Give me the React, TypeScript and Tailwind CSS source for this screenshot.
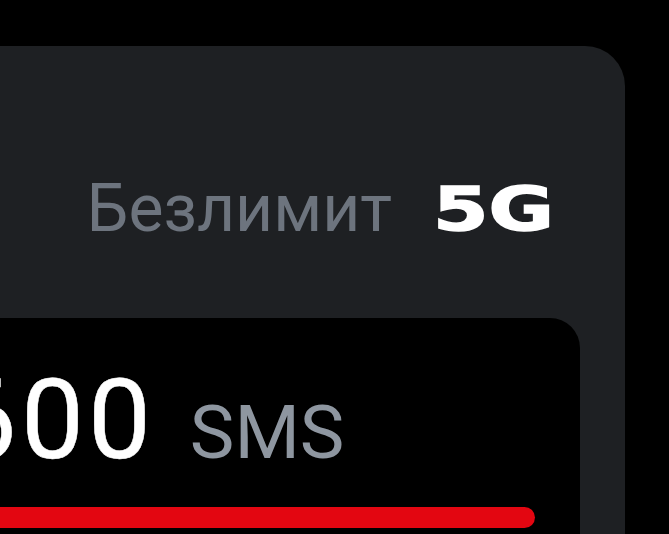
export default function App() {
  return (
    <div className="w-[669px] h-[534px] bg-black overflow-hidden pt-[46px]" style={{ fontFamily: "Roboto, 'Liberation Sans', sans-serif" }}>
      {/* Tariff card */}
      <div className="ml-[-40px] w-[665px] h-[520px] bg-[#1e2023] rounded-tr-[40px] pr-[45px]">
        <div className="flex items-center justify-end gap-[41px] pr-[30px] pt-[130px] leading-none whitespace-nowrap">
          <span className="text-[66px] text-[#6d747e]">Безлимит</span>
          <span className="inline-block w-[117px]">
            <span
              className="inline-block origin-left scale-x-[1.33] text-[60px] font-black text-white [-webkit-text-stroke:1.5px_white]"
              style={{ fontFamily: "'DejaVu Sans', sans-serif" }}
            >
              5G
            </span>
          </span>
        </div>

        {/* SMS block */}
        <div className="mt-[76px] bg-black rounded-tr-[30px] h-[260px] pt-[46px] pr-[45px]">
          <div className="flex items-baseline gap-[35px] ml-[-6px] leading-none whitespace-nowrap">
            <span className="text-[112px] tracking-[4px] text-white [-webkit-text-stroke:0.5px_white]">600</span>
            <span className="text-[75px] text-[#8e96a0]">SMS</span>
          </div>
          <div className="mt-[31px] h-[21px] bg-[#e30611] rounded-full"></div>
        </div>
      </div>
    </div>
  );
}
